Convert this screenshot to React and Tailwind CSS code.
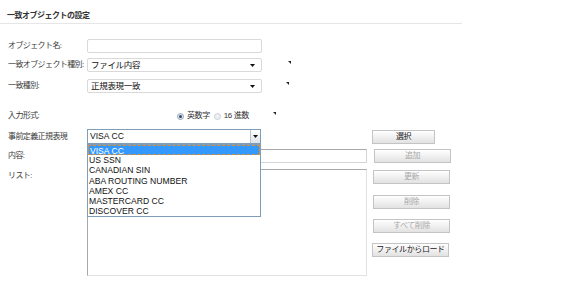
import React from "react";

const jp = { fontFamily: '"Liberation Sans", "Noto Sans CJK JP", sans-serif' };

function Marker({ className = "" }) {
  return (
    <svg width="3" height="3" viewBox="0 0 3 3" className={className}>
      <path d="M0 0 H3 V3 Z" fill="#222" />
    </svg>
  );
}

function Arrow() {
  return (
    <svg width="5" height="3" viewBox="0 0 5 3">
      <path d="M0 0 H5 L2.5 3 Z" fill="#111" />
    </svg>
  );
}

function Label({ children, className = "" }) {
  return (
    <div className={"w-[79px] shrink-0 whitespace-nowrap text-[8px] leading-[10px] text-[#3a3a3a] tracking-[-0.6px] " + className}>
      {children}
    </div>
  );
}

function Btn({ children, disabled, className = "" }) {
  return (
    <div
      className={
        "flex h-[14px] items-center justify-center border border-[#c4c4c4] bg-gradient-to-b from-white to-[#e2e2e2] text-[8px] leading-none tracking-[-0.4px] " +
        (disabled ? "text-[#a8a8a8] " : "text-[#222] ") +
        className
      }
    >
      {children}
    </div>
  );
}

const items = [
  "VISA CC",
  "US SSN",
  "CANADIAN SIN",
  "ABA ROUTING NUMBER",
  "AMEX CC",
  "MASTERCARD CC",
  "DISCOVER CC",
];

export default function App() {
  return (
    <div className="relative h-[297px] w-[576px] overflow-hidden bg-white" style={jp}>
      {/* header */}
      <div className="w-[462px] border-b border-[#e6e6e6] pb-[2px] pl-[7px] pt-[11px] text-[8px] font-bold leading-[10px] tracking-[-0.5px] text-[#333]">
        一致オブジェクトの設定
      </div>

      <div className="pl-[8px]">
        {/* row 1 */}
        <div className="mt-[15px] flex h-[14px] items-center">
          <Label>オブジェクト名:</Label>
          <div className="h-[14px] w-[175px] rounded-[2px] border border-[#d9d9d9] bg-white" />
        </div>

        {/* row 2 */}
        <div className="mt-[5px] flex h-[14px] items-center">
          <Label>一致オブジェクト種別:</Label>
          <div className="flex h-[14px] w-[175px] items-center justify-between rounded-[2px] border border-[#d9d9d9] bg-white pl-[3px] pr-[6px] text-[8.5px] tracking-[-0.3px] text-[#111]">
            <span>ファイル内容</span>
            <Arrow />
          </div>
          <Marker className="mb-[5px] ml-[26px]" />
        </div>

        {/* row 3 */}
        <div className="mt-[7px] flex h-[14px] items-center">
          <Label>一致種別:</Label>
          <div className="flex h-[14px] w-[175px] items-center justify-between rounded-[2px] border border-[#d9d9d9] bg-white pl-[3px] pr-[6px] text-[8.5px] tracking-[-0.3px] text-[#111]">
            <span>正規表現一致</span>
            <Arrow />
          </div>
          <Marker className="mb-[5px] ml-[24px]" />
        </div>

        {/* row 4 */}
        <div className="mt-[18px] flex h-[10px] items-center">
          <Label>入力形式:</Label>
          <div className="ml-[90px] flex items-center text-[8px] leading-none tracking-[-0.4px] text-[#333]">
            <span className="flex h-[7px] w-[7px] items-center justify-center rounded-full border border-[#9aa6b2] bg-[#dfe6ee]">
              <span className="h-[3px] w-[3px] rounded-full bg-[#2a4a72]" />
            </span>
            <span className="ml-[3px]">英数字</span>
            <span className="ml-[4px] h-[7px] w-[7px] rounded-full border border-[#c9cfd6] bg-[#eef1f4]" />
            <span className="ml-[3px]">16 進数</span>
          </div>
          <Marker className="mb-[6px] ml-[24px]" />
        </div>

        {/* row 5 */}
        <div className="mt-[8px] flex h-[15px] items-center">
          <Label>事前定義正規表現</Label>
          <div className="relative flex h-[15px] w-[174px] items-center justify-between border border-[#7f9db9] bg-white pl-[2px] text-[8.6px] text-[#111]" style={{ fontFamily: '"Liberation Sans", sans-serif' }}>
            <span>VISA CC</span>
            <span className="flex h-[13px] w-[10px] items-center justify-center border-l border-[#b8c4d0] bg-gradient-to-b from-white to-[#dde3ea]">
              <Arrow />
            </span>
            {/* dropdown */}
            <div className="absolute left-[-1px] top-[14px] z-10 w-[174px] border border-[#7f9db9] bg-white">
              {items.map((it, i) => (
                <div
                  key={it}
                  className={
                    "h-[10.2px] pl-[1px] text-[8.6px] leading-[10px] " +
                    (i === 0 ? "border border-dashed border-[#e0902a] bg-[#3399ff] pl-[0px] text-white" : "text-[#111]")
                  }
                >
                  {it}
                </div>
              ))}
            </div>
          </div>
          <Btn className="ml-[111px] w-[63px]">選択</Btn>
        </div>

        {/* row 6 + list */}
        <div className="mt-[5px] flex">
          <div className="w-[359px]">
            <div className="flex h-[14px] items-center">
              <Label>内容:</Label>
              <div className="h-[14px] w-[280px] border border-[#d4d4d4] border-t-[#a8a8a8] bg-white" />
            </div>
            <div className="mt-[6px] flex">
              <Label className="mt-[2px]">リスト:</Label>
              <div className="h-[107px] w-[280px] border border-[#e2e2e2] border-l-[#a8a8a8] border-t-[#a8a8a8] bg-white" />
            </div>
          </div>
          <div className="ml-[6px] flex flex-col">
            <Btn disabled className="ml-[1px] w-[77px]">追加</Btn>
            <Btn disabled className="mt-[7px] w-[77px]">更新</Btn>
            <Btn disabled className="mt-[11px] w-[77px]">削除</Btn>
            <Btn disabled className="mt-[10px] w-[77px]">すべて削除</Btn>
            <Btn className="ml-[-1px] mt-[10px] w-[77px]">ファイルからロード</Btn>
          </div>
        </div>
      </div>
    </div>
  );
}
